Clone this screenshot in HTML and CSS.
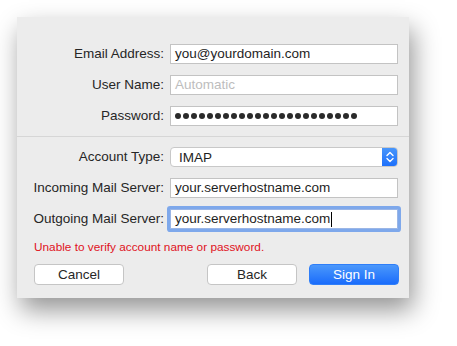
FILE: index.html
```html
<!DOCTYPE html>
<html>
<head>
<meta charset="utf-8">
<link rel="stylesheet" href="styles.css">
</head>
<body>
<div class="page">
  <div class="panel">
    <div class="grid top">
      <label class="lbl">Email Address:</label>
      <div class="field">you@yourdomain.com</div>
      <label class="lbl">User Name:</label>
      <div class="field placeholder">Automatic</div>
      <label class="lbl">Password:</label>
      <div class="field dots">
        <span class="dot"></span><span class="dot"></span><span class="dot"></span><span class="dot"></span><span class="dot"></span><span class="dot"></span><span class="dot"></span><span class="dot"></span><span class="dot"></span><span class="dot"></span><span class="dot"></span><span class="dot"></span><span class="dot"></span><span class="dot"></span><span class="dot"></span><span class="dot"></span><span class="dot"></span><span class="dot"></span><span class="dot"></span><span class="dot"></span><span class="dot"></span><span class="dot"></span><span class="dot"></span>
      </div>
    </div>
    <div class="divider"></div>
    <div class="grid bottom">
      <label class="lbl">Account Type:</label>
      <div class="popup">
        <span class="popup-text">IMAP</span>
        <span class="stepper">
          <svg width="16" height="20" viewBox="0 0 16 20">
            <path d="M5 8.5 L8 5.5 L11 8.5" fill="none" stroke="#fff" stroke-width="1.4" stroke-linecap="round" stroke-linejoin="round"/>
            <path d="M5 11.5 L8 14.5 L11 11.5" fill="none" stroke="#fff" stroke-width="1.4" stroke-linecap="round" stroke-linejoin="round"/>
          </svg>
        </span>
      </div>
      <label class="lbl">Incoming Mail Server:</label>
      <div class="field">your.serverhostname.com</div>
      <label class="lbl">Outgoing Mail Server:</label>
      <div class="field focused">your.serverhostname.com<span class="caret"></span></div>
    </div>
    <div class="error">Unable to verify account name or password.</div>
    <div class="buttons">
      <button class="btn">Cancel</button>
      <div class="right">
        <button class="btn">Back</button>
        <button class="btn primary">Sign In</button>
      </div>
    </div>
  </div>
</div>
</body>
</html>
```
FILE: styles.css
```css
html, body {
  margin: 0;
  padding: 0;
  background: #ffffff;
}
body {
  font-family: "Liberation Sans", Arial, sans-serif;
  font-size: 13.5px;
  color: #262626;
  min-height: 346px;
}
.page {
  padding: 17px 0 0 17px;
  min-height: 346px;
  box-sizing: border-box;
}
.panel {
  width: 392px;
  height: 281px;
  box-sizing: border-box;
  background: #ececec;
  box-shadow: 4px 12px 24px rgba(0, 0, 0, 0.42);
  padding-top: 27px;
}
.grid {
  display: grid;
  grid-template-columns: 147px 228px;
  column-gap: 6px;
  row-gap: 11px;
  align-items: center;
}
.lbl {
  text-align: right;
  line-height: 20px;
  color: #262626;
}
.field {
  height: 20px;
  box-sizing: border-box;
  background: #fff;
  border: 1px solid #c3c3c3;
  padding: 0 4px;
  line-height: 18px;
  color: #1e1e1e;
  white-space: nowrap;
  display: flex;
  align-items: center;
}
.placeholder {
  color: #bdbdbd;
}
.dots {
  gap: 2px;
  padding-left: 4px;
}
.dot {
  width: 6px;
  height: 6px;
  border-radius: 50%;
  background: #2a2a2a;
  flex: none;
}
.divider {
  height: 1px;
  background: #d6d6d6;
  margin: 10px 0 10px 0;
}
.popup {
  height: 20px;
  box-sizing: border-box;
  background: #fff;
  border: 1px solid #c8c8c8;
  border-radius: 4px;
  display: flex;
  align-items: center;
  justify-content: space-between;
  overflow: hidden;
}
.popup-text {
  padding-left: 8px;
  color: #1e1e1e;
}
.stepper {
  width: 16px;
  height: 20px;
  margin-right: -1px;
  background: linear-gradient(#4b98fb, #1b6efb);
  display: flex;
  border-radius: 0 4px 4px 0;
}
.focused {
  box-shadow: 0 0 0 3px #7ea8eb;
  border-color: #9bb6e6;
  border-radius: 1px;
}
.caret {
  display: inline-block;
  width: 1px;
  height: 15px;
  background: #000;
  margin-left: 1px;
}
.error {
  color: #e0121c;
  font-size: 11.8px;
  padding-left: 17px;
  margin-top: 11px;
  line-height: 14px;
}
.buttons {
  display: flex;
  justify-content: space-between;
  padding: 0 10px 0 17px;
  margin-top: 10px;
}
.right {
  display: flex;
  gap: 12px;
}
.btn {
  width: 90px;
  height: 21px;
  box-sizing: border-box;
  border: 1px solid #c5c5c5;
  border-radius: 4px;
  background: #fff;
  font-family: "Liberation Sans", Arial, sans-serif;
  font-size: 13.5px;
  color: #262626;
  padding: 0;
  line-height: 19px;
}
.primary {
  background: linear-gradient(#4b98fb, #1a6cfb);
  border-color: #2f7ef8;
  color: #fff;
}
```
